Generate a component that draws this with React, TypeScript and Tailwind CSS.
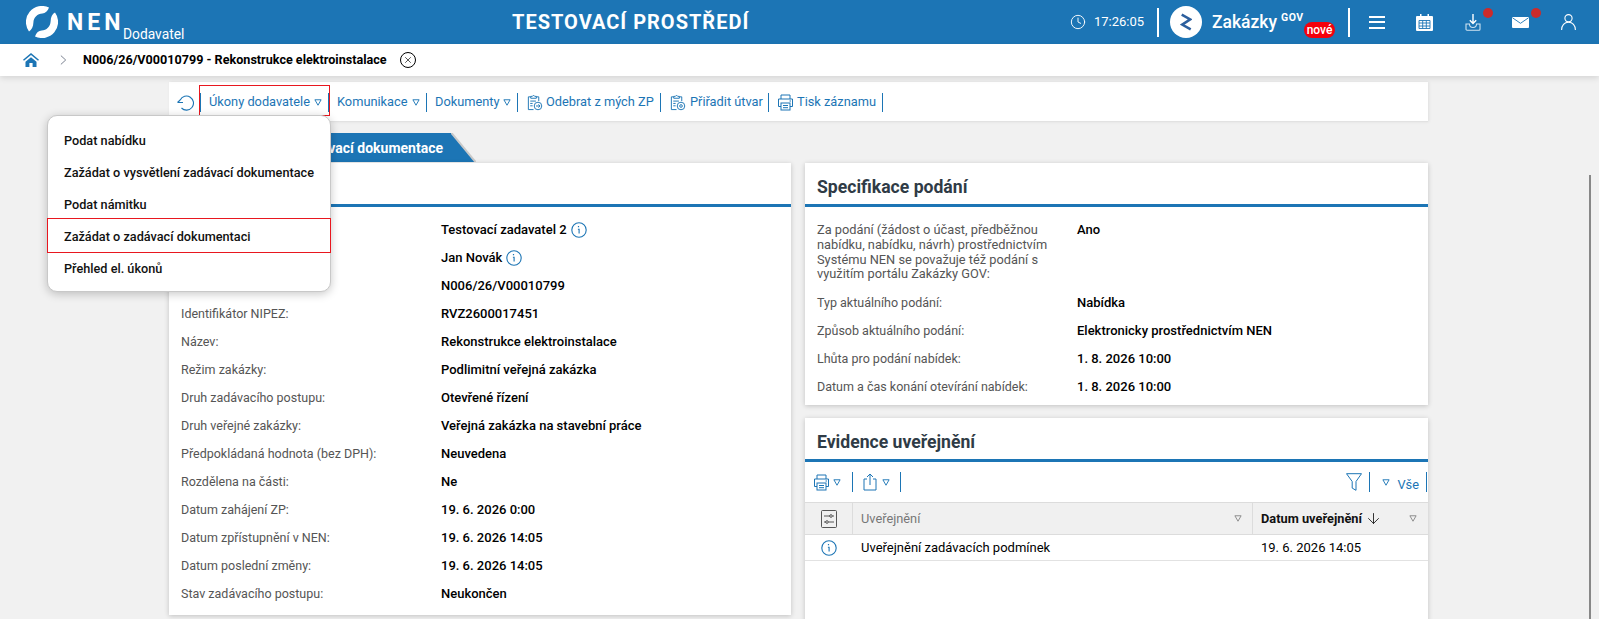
import { ArrowDown, Clock, X } from "lucide-react";

const leftRows = [
  ["", "Testovací zadavatel 2"],
  ["", "Jan Novák"],
  ["", "N006/26/V00010799"],
  ["Identifikátor NIPEZ:", "RVZ2600017451"],
  ["Název:", "Rekonstrukce elektroinstalace"],
  ["Režim zakázky:", "Podlimitní veřejná zakázka"],
  ["Druh zadávacího postupu:", "Otevřené řízení"],
  ["Druh veřejné zakázky:", "Veřejná zakázka na stavební práce"],
  ["Předpokládaná hodnota (bez DPH):", "Neuvedena"],
  ["Rozdělena na části:", "Ne"],
  ["Datum zahájení ZP:", "19. 6. 2026 0:00"],
  ["Datum zpřístupnění v NEN:", "19. 6. 2026 14:05"],
  ["Datum poslední změny:", "19. 6. 2026 14:05"],
  ["Stav zadávacího postupu:", "Neukončen"],
];

const rightRows = [
  ["Typ aktuálního podání:", "Nabídka"],
  ["Způsob aktuálního podání:", "Elektronicky prostřednictvím NEN"],
  ["Lhůta pro podání nabídek:", "1. 8. 2026 10:00"],
  ["Datum a čas konání otevírání nabídek:", "1. 8. 2026 10:00"],
];

const menuItems = [
  "Podat nabídku",
  "Zažádat o vysvětlení zadávací dokumentace",
  "Podat námitku",
  "Zažádat o zadávací dokumentaci",
  "Přehled el. úkonů",
];

function Caret({ className = "" }: { className?: string }) {
  return (
    <svg viewBox="0 0 10 9" className={`w-[8px] h-[7px] shrink-0 ${className}`} fill="none" stroke="currentColor" strokeWidth="1.2">
      <path d="M1 1h8L5 8z" />
    </svg>
  );
}

function InfoIcon() {
  return (
    <svg viewBox="0 0 16 16" className="w-4 h-4 text-[#1c75b5]" fill="none" stroke="currentColor" strokeWidth="1.1">
      <circle cx="8" cy="8" r="7.2" />
      <path d="M6.9 4.6h1.2M6.9 7.2h1.2v4.2" />
    </svg>
  );
}

function Sep() {
  return <span className="w-px h-[19px] bg-[#1c75b5] ml-[6px] mr-[8px] shrink-0" />;
}

function ClipboardIcon({ gear }: { gear?: boolean }) {
  return (
    <svg viewBox="0 0 18 18" className="w-[17px] h-[17px] shrink-0" fill="none" stroke="currentColor" strokeWidth="1">
      <path d="M5 3H2.5v13.5H8M11 3h2.5v4.5" />
      <path d="M5 4.5v-2h1.7a1.4 1.4 0 0 1 2.6 0H11v2z" />
      <path d="M4.5 7.5h6M4.5 10h2.5M4.5 12.5h2.5" />
      <circle cx="12.7" cy="12.7" r="4" />
      {gear ? <circle cx="12.7" cy="12.7" r="1.4" /> : <path d="M10.6 12.7h4.2M13.2 11l1.7 1.7-1.7 1.7" />}
    </svg>
  );
}

function PrinterIcon() {
  return (
    <svg viewBox="0 0 17 17" className="w-[17px] h-[17px] shrink-0" fill="none" stroke="currentColor" strokeWidth="1">
      <path d="M4 5V1h9v4" />
      <path d="M4 12.5H1.5V5h14v7.5H13" />
      <rect x="4" y="9" width="9" height="7" />
      <path d="M6 11.5h5M6 13.7h5M12.5 7h1.5" />
    </svg>
  );
}

function ShareIcon() {
  return (
    <svg viewBox="0 0 14 18" className="w-[14px] h-[18px] shrink-0" fill="none" stroke="currentColor" strokeWidth="1">
      <path d="M4 6H1v11h12V6h-3M7 12V1M4 4l3-3 3 3" />
    </svg>
  );
}

function RefreshIcon() {
  return (
    <svg viewBox="0 0 17 17" className="w-[17px] h-[17px] shrink-0" fill="none" stroke="currentColor" strokeWidth="1.1">
      <path d="M3.2 6A7 7 0 1 1 4.5 14" />
      <path d="M0.5 8.5h5.5M3.2 6l-2.7 2.5" />
    </svg>
  );
}

function Logo() {
  return (
    <svg viewBox="0 0 32 32" className="w-[32px] h-[32px] shrink-0" fill="#fff">
      <path d="M23 1.6A16 16 0 0 0 3 25.4C5.6 24 7.3 21 7.4 16.5 7.6 11.5 11.5 7.6 16.4 7.5 19.2 7.4 21.8 5.4 23 1.6z" />
      <path d="M9 30.4A16 16 0 0 0 29 6.6C26.4 8 24.7 11 24.6 15.5 24.4 20.5 20.5 24.4 15.6 24.5 12.8 24.6 10.2 26.6 9 30.4z" />
    </svg>
  );
}

function CardTitle({ children }: { children?: React.ReactNode }) {
  return (
    <div className="h-[44px] border-b-[3px] border-[#1c75b5] pl-3 flex items-center text-[17.6px] font-bold text-[#2f3b46] pt-[7px] shrink-0">
      {children}
    </div>
  );
}

export default function App() {
  return (
    <div className="h-[619px] w-full overflow-hidden bg-[#f1f1f1] font-['Roboto',sans-serif] text-[13px] text-black relative">
      {/* Top bar */}
      <header className="h-[44px] bg-[#1c75b5] flex items-center text-white">
        <div className="flex items-center w-[512px] pl-[26px] shrink-0 h-full">
          <Logo />
          <span className="ml-[9px] w-[56px] text-[23px] font-bold tracking-[4px] leading-none">NEN</span>
          <span className="self-end text-[13.8px] leading-none mb-[2px]">Dodavatel</span>
        </div>
        <div className="text-[20px] font-bold tracking-[1px] whitespace-nowrap">TESTOVACÍ PROSTŘEDÍ</div>
        <div className="ml-auto flex items-center h-full mr-[23px]">
          <Clock size={16} strokeWidth={1.4} />
          <span className="ml-[8px] text-[13px] w-[51px]">17:26:05</span>
          <span className="w-[2px] h-[29px] bg-white ml-[12px]" />
          <span className="w-[32px] h-[32px] rounded-full bg-white ml-[11px] flex items-center justify-center">
            <svg viewBox="0 0 14 20" className="w-[12px] h-[20px]" fill="none" stroke="#2c5f9e" strokeWidth="3">
              <path d="M2 1.5l10 5.5L2.5 13l10 5.5" />
            </svg>
          </span>
          <span className="ml-[10px] text-[17.5px] font-medium w-[65px] whitespace-nowrap">Zakázky</span>
          <div className="relative w-[71px] h-full">
            <span className="absolute left-[4px] top-[13px] text-[10.5px] font-bold leading-none tracking-[0.5px]">GOV</span>
            <span className="absolute left-[27px] top-[22px] h-[16px] w-[31px] bg-[#f5000c] rounded-full text-[12px] font-medium leading-[16px] text-center">nové</span>
          </div>
          <span className="w-[2px] h-[29px] bg-white" />
          <span className="ml-[19px] w-[16px] flex flex-col gap-[3.5px]">
            <span className="h-[2px] bg-white" />
            <span className="h-[2px] bg-white" />
            <span className="h-[2px] bg-white" />
          </span>
          <svg viewBox="0 0 17 17" className="w-[17px] h-[17px] ml-[31px]">
            <path d="M4 0h1.5v2H11.5V0H13v2h3a1 1 0 0 1 1 1v13a1 1 0 0 1-1 1H1a1 1 0 0 1-1-1V3a1 1 0 0 1 1-1h3z" fill="#fff" />
            <path d="M3 6.5h11v8H3zM3 9h11M3 12h11M6.7 6.5v8M10.3 6.5v8" fill="none" stroke="#1c75b5" strokeWidth="0.9" />
          </svg>
          <span className="ml-[32px] relative flex">
            <svg viewBox="0 0 16 17" className="w-[16px] h-[17px]" fill="none" stroke="#fff">
              <path d="M8 0v9M4.8 6.2L8 9.5l3.2-3.3" strokeWidth="1.4" />
              <path d="M1 10v5.2a1 1 0 0 0 1 1h12a1 1 0 0 0 1-1V10h-3.5a3.5 3.5 0 0 1-7 0z" strokeWidth="1.1" stroke="#cfe3f1" />
            </svg>
            <span className="absolute left-[18px] top-[-6px] w-[10px] h-[10px] rounded-full bg-[#cc2b2b]" />
          </span>
          <span className="ml-[31px] relative flex">
            <svg viewBox="0 0 17 11" className="w-[17px] h-[11px]">
              <rect width="17" height="11" rx="1" fill="#fff" />
              <path d="M0.5 0.8l8 5.5 8-5.5" fill="none" stroke="#1c75b5" strokeWidth="0.9" />
            </svg>
            <span className="absolute left-[19px] top-[-9px] w-[10px] h-[10px] rounded-full bg-[#cc2b2b]" />
          </span>
          <svg viewBox="0 0 15 16" className="w-[15px] h-[16px] ml-[32px]" fill="none" stroke="#fff" strokeWidth="1.1">
            <circle cx="7.5" cy="4.2" r="3.6" />
            <path d="M0.6 16c0-4.5 2.8-7.7 6.9-7.7s6.9 3.2 6.9 7.7" />
          </svg>
        </div>
      </header>

      {/* Breadcrumb */}
      <nav className="h-[32px] bg-white flex items-center pl-[23px] shadow-[0_2px_6px_rgba(0,0,0,0.12)] relative z-10">
        <svg viewBox="0 0 18 16" className="w-[16px] h-[16px] text-[#1c75b5]" fill="currentColor">
          <path d="M9 0L0 7.6l1.1 1.3L9 2.4l7.9 6.5L18 7.6zM2.8 10v6h4.4v-4.5h3.6V16h4.4v-6L9 4.8z" />
        </svg>
        <svg viewBox="0 0 8 12" className="w-[7px] h-[12px] ml-[21px] text-gray-500" fill="none" stroke="currentColor">
          <path d="M1 1l5.5 5L1 11" />
        </svg>
        <span className="ml-[16px] font-bold text-[12.6px] whitespace-nowrap">N006/26/V00010799 - Rekonstrukce elektroinstalace</span>
        <span className="ml-[13px] w-4 h-4 rounded-full border border-black flex items-center justify-center">
          <X size={10} strokeWidth={1.6} />
        </span>
      </nav>

      <main className="w-[1259px] ml-[169px]">
        {/* Toolbar */}
        <div className="mt-[6px] h-[40px] pt-[1px] bg-white flex items-center pl-[8px] text-[#1c75b5] text-[12.8px] border-b border-[#e2e2e2] shadow-[1px_0_3px_rgba(0,0,0,0.08)] whitespace-nowrap">
          <RefreshIcon />
          <Sep />
          <span className="w-[100px]">Úkony dodavatele</span>
          <Caret className="ml-[5px]" />
          <Sep />
          <span className="w-[71px]">Komunikace</span>
          <Caret className="ml-[4px]" />
          <Sep />
          <span className="w-[64px]">Dokumenty</span>
          <Caret className="ml-[4px]" />
          <Sep />
          <ClipboardIcon />
          <span className="ml-[3px] w-[108px]">Odebrat z mých ZP</span>
          <Sep />
          <ClipboardIcon gear />
          <span className="ml-[4px] w-[72px]">Přiřadit útvar</span>
          <Sep />
          <PrinterIcon />
          <span className="ml-[3px]">Tisk záznamu</span>
          <Sep />
        </div>

        {/* Tab */}
        <div className="mt-[11px] h-[29px] flex">
          <div className="w-[282px] bg-[#1c75b5] text-white font-bold text-[14px] flex items-center justify-end pr-[8px] pt-[2px] whitespace-nowrap overflow-hidden">
            Základní údaje a zadávací dokumentace
          </div>
          <svg viewBox="0 0 25 29" className="w-[25px] h-[29px]">
            <path d="M0 0L24 29H0z" fill="#1c75b5" />
            <path d="M0.5 0L24.5 29" stroke="#c9c9c9" strokeWidth="2" fill="none" />
          </svg>
        </div>

        <div className="mt-[1px] flex gap-[14px] items-start">
          {/* Left card */}
          <section className="w-[622px] h-[452px] bg-white shadow-[0_1px_5px_rgba(0,0,0,0.2)] shrink-0">
            <CardTitle />
            <div className="pt-[9px]">
              {leftRows.map(([label, value], i) => (
                <div key={value + i} className="h-[28px] flex items-center pl-[12px]">
                  <span className="w-[260px] text-[12.5px] text-[#555] shrink-0">{label}</span>
                  <span className="font-medium">{value}</span>
                  {i < 2 && <span className="ml-[4px] flex"><InfoIcon /></span>}
                </div>
              ))}
            </div>
          </section>

          {/* Right column */}
          <div className="w-[623px] flex flex-col gap-[13px]">
            <section className="h-[242px] bg-white shadow-[0_1px_5px_rgba(0,0,0,0.2)]">
              <CardTitle>Specifikace podání</CardTitle>
              <div className="flex pl-3 pt-[16px] leading-[14.8px] text-[12.8px] text-[#555]">
                <span className="w-[260px] pr-[20px] shrink-0">
                  Za podání (žádost o účast, předběžnou nabídku, nabídku, návrh) prostřednictvím Systému NEN se považuje též podání s využitím portálu Zakázky GOV:
                </span>
                <span className="font-medium text-[13px] text-black">Ano</span>
              </div>
              <div className="pt-[7px]">
                {rightRows.map(([label, value]) => (
                  <div key={label} className="h-[28px] flex items-center pl-3">
                    <span className="w-[260px] text-[12.5px] text-[#555] shrink-0">{label}</span>
                    <span className="font-medium">{value}</span>
                  </div>
                ))}
              </div>
            </section>

            <section className="h-[240px] bg-white shadow-[0_1px_5px_rgba(0,0,0,0.2)]">
              <CardTitle>Evidence uveřejnění</CardTitle>
              <div className="h-[40px] flex items-center text-[#1c75b5] pl-[8px] pr-px">
                <PrinterIcon />
                <Caret className="ml-[3px]" />
                <span className="w-px h-[20px] bg-[#1c75b5] ml-[11px] mr-[10px]" />
                <ShareIcon />
                <Caret className="ml-[5px]" />
                <span className="w-px h-[20px] bg-[#1c75b5] ml-[10px]" />
                <svg viewBox="0 0 16 18" className="w-[16px] h-[18px] ml-auto" fill="none" stroke="currentColor" strokeWidth="1">
                  <path d="M0.5 0.7h15L10 8.5v8.8l-3.8-2.2V8.5z" />
                </svg>
                <span className="w-px h-[20px] bg-[#1c75b5] ml-[7px] mr-[12px]" />
                <Caret />
                <span className="ml-[7px] mt-[6px] text-[12.8px]">Vše</span>
                <span className="w-px h-[20px] bg-[#1c75b5] ml-[7px]" />
              </div>
              <div className="h-[33px] flex bg-[#f0f0f0] border-y border-[#dcdcdc] text-[#777] text-[12.8px]">
                <div className="w-[48px] flex items-center justify-center border-r border-[#dcdcdc]">
                  <svg viewBox="0 0 16 18" className="w-[16px] h-[18px] text-[#444]" fill="none" stroke="currentColor" strokeWidth="0.9">
                    <rect x="0.5" y="0.5" width="15" height="17" rx="1" />
                    <path d="M3 6h6M11.5 6H13M3 12h2M7.5 12H13" />
                    <circle cx="10" cy="6" r="1.3" />
                    <circle cx="6" cy="12" r="1.3" />
                  </svg>
                </div>
                <div className="w-[400px] flex items-center pl-[8px] pr-[10px] border-r border-[#dcdcdc]">
                  <span>Uveřejnění</span>
                  <Caret className="ml-auto text-[#888]" />
                </div>
                <div className="flex-1 flex items-center pl-[8px] pr-[11px]">
                  <span className="font-bold text-[#111]">Datum uveřejnění</span>
                  <ArrowDown size={17} strokeWidth={1.2} className="ml-[3px] text-[#111]" />
                  <Caret className="ml-auto text-[#888]" />
                </div>
              </div>
              <div className="h-[26px] flex items-center border-b border-[#e2e2e2]">
                <div className="w-[48px] flex justify-center"><InfoIcon /></div>
                <div className="w-[400px] pl-[8px]">Uveřejnění zadávacích podmínek</div>
                <div className="pl-[8px]">19. 6. 2026 14:05</div>
              </div>
            </section>
          </div>
        </div>
      </main>

      {/* Open menu */}
      <div className="absolute left-[47px] top-[115px] w-[284px] h-[177px] bg-white rounded-[10px] border border-[#c8c8c8] shadow-[0_2px_10px_rgba(0,0,0,0.22)] z-20 pt-[9px]">
        {menuItems.map((item, i) => (
          <div key={item} className="h-[32px] flex items-center pl-[16px] text-[12.7px] font-medium text-[#111] relative whitespace-nowrap">
            {item}
            {i === 3 && <span className="absolute -top-[3px] bottom-0 -left-px -right-px border border-[#e8171f]" />}
          </div>
        ))}
      </div>

      {/* Red highlight round the toolbar item */}
      <div className="absolute left-[199px] top-[85px] w-[131px] h-[31px] border border-[#e8171f] z-10" />

      {/* Scrollbar */}
      <div className="absolute right-[8px] top-[175px] bottom-0 w-[2px] bg-[#888]" />
    </div>
  );
}
